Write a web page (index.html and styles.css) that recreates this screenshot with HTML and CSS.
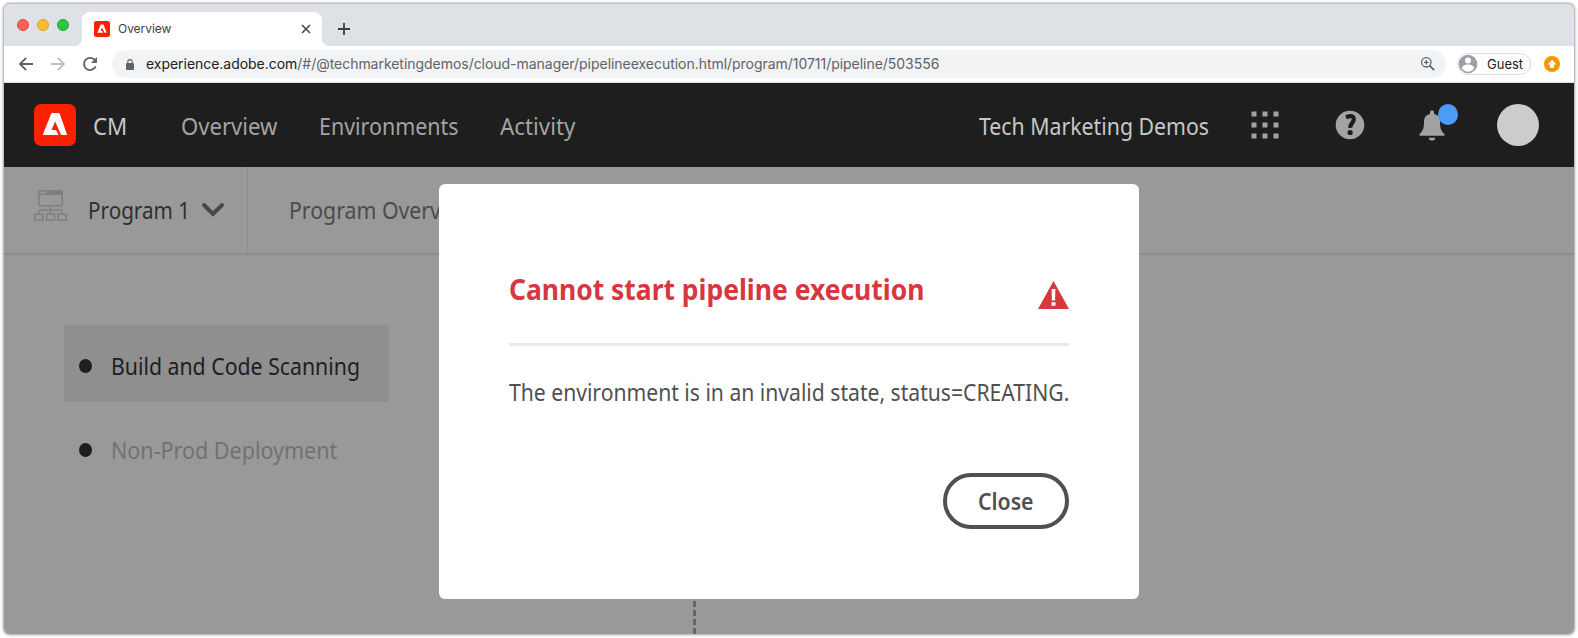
FILE: index.html
```html
<!DOCTYPE html>
<html lang="en">
<head>
<meta charset="utf-8">
<title>Overview</title>
<link rel="stylesheet" href="styles.css">
</head>
<body>
<div class="window">
  <div class="tabstrip">
    <i class="light red"></i><i class="light yellow"></i><i class="light green"></i>
    <div class="tab">
      <svg class="favicon" viewBox="0 0 42 42"><rect width="42" height="42" rx="6" fill="#fa2100"/><path d="M17.600 9.500h7.400L33 31h-5.300L21.100 17.600l-4.200 8h4.200L24.200 31H8.900z" fill="#fff"/></svg>
      <span class="tab-title">Overview</span>
      <svg class="tab-close" viewBox="0 0 10 10"><path d="M1 1l8 8M9 1L1 9" stroke="#45484c" stroke-width="1.600"/></svg>
    </div>
    <svg class="newtab" viewBox="0 0 12 12"><path d="M6 0v12M0 6h12" stroke="#3c4043" stroke-width="1.800"/></svg>
  </div>
  <div class="toolbar">
    <svg class="nav back" viewBox="0 0 14 14"><path d="M14 7H1.500M7.200 .8L1 7l6.200 6.200" fill="none" stroke="#5f6368" stroke-width="1.800"/></svg>
    <svg class="nav forward" viewBox="0 0 14 14"><path d="M0 7h12.500M6.800 .8L13 7l-6.200 6.200" fill="none" stroke="#babcbe" stroke-width="1.800"/></svg>
    <svg class="nav reload" viewBox="0 0 14 14"><path d="M12.700 9.300A6.100 6.100 0 1 1 11.500 2.700L13 4.300" fill="none" stroke="#5f6368" stroke-width="1.800"/><path d="M14 0v6H8z" fill="#5f6368"/></svg>
    <div class="address">
      <svg class="lock" viewBox="0 0 8 11"><rect y="4" width="8" height="7" rx="1" fill="#5f6368"/><path d="M1.800 4.500V2.800a2.200 2.200 0 0 1 4.400 0v1.700" fill="none" stroke="#5f6368" stroke-width="1.100"/></svg>
      <span class="url"><b>experience.adobe.com</b>/#/@techmarketingdemos/cloud-manager/pipelineexecution.html/program/10711/pipeline/503556</span>
      <svg class="zoom" viewBox="0 0 14 14"><circle cx="5.300" cy="5.300" r="4.700" fill="none" stroke="#5f6368" stroke-width="1.300"/><path d="M8.600 8.600l4.600 4.600" stroke="#5f6368" stroke-width="1.800"/><path d="M5.300 3v4.600M3 5.300h4.600" stroke="#5f6368" stroke-width="1.200"/></svg>
    </div>
    <div class="guest">
      <svg viewBox="0 0 20 20"><circle cx="10" cy="10" r="9.300" fill="#9aa0a6"/><circle cx="10" cy="6.500" r="3" fill="#fff"/><path d="M4 14.300c0-5 12-5 12 0a7 7 0 0 1-12 0z" fill="#fff"/></svg>
      <span>Guest</span>
    </div>
    <svg class="update" viewBox="0 0 16 16"><circle cx="8" cy="8" r="8" fill="#f29900"/><path d="M8 3.800l4.300 4.600H10V12H6V8.400H3.700z" fill="#fff"/></svg>
  </div>
  <header class="shell">
    <svg class="logo" viewBox="0 0 42 42"><rect width="42" height="42" rx="7" fill="#fa2100"/><path d="M18.200 9h6.300q.9 0 1.300.9L33.200 31h-5.400q-.8 0-1.200-.9L21.200 17.500l-3.700 8.600h4q.7 0 1 .7L24.500 31H8.700L17 9.900q.4-.9 1.200-.9z" fill="#fff"/></svg>
    <span class="clean product">CM</span>
    <nav>
      <span class="clean n1">Overview</span>
      <span class="clean n2">Environments</span>
      <span class="clean n3">Activity</span>
    </nav>
    <span class="clean org">Tech Marketing Demos</span>
    <svg class="apps" viewBox="0 0 28 28" fill="#a3a3a3"><path d="M.5.500h5v5h-5zM11.500.500h5v5h-5zM22.500.500h5v5h-5zM.5 11.500h5v5h-5zM11.500 11.500h5v5h-5zM22.500 11.500h5v5h-5zM.5 22.500h5v5h-5zM11.500 22.500h5v5h-5zM22.500 22.500h5v5h-5z"/></svg>
    <svg class="help" viewBox="0 0 30 30"><circle cx="15" cy="15" r="14.300" fill="#a3a3a3"/><path d="M11 7.200q7.800-2.700 7.800 1.900c0 3.800-3.800 4.500-3.600 8.700" fill="none" stroke="#1e1e1e" stroke-width="4.200"/><circle cx="15.100" cy="22.500" r="2.600" fill="#1e1e1e"/></svg>
    <div class="bell">
      <svg viewBox="0 0 26 31" fill="#a3a3a3"><path d="M11 4V1.800Q11 .5 13 .5t2 1.300V4c4 .8 6 3.500 6 8 0 6 1 9 4.500 12.300v1.500H.5v-1.500C4 21 5 18 5 12c0-4.500 2-7.200 6-8zM9.500 27.700h7q-.8 2.900-3.500 2.900t-3.500-2.900z"/></svg>
      <i class="badge"></i>
    </div>
    <i class="avatar"></i>
  </header>
  <main class="content">
    <div class="subnav">
      <div class="program">
        <svg class="tree" viewBox="0 0 33 31" fill="none" stroke="#7f7f7f" stroke-width="1.600"><rect x="4.800" y=".8" width="23.400" height="15" rx="1"/><path d="M5 4.300h23"/><path d="M12 2.500h16" stroke-width="3"/><path d="M16.500 16v8M5 24v-2.500q0-1.500 1.500-1.500h20q1.500 0 1.500 1.500V24"/><path d="M.8 24.300h8v6h-8zM12.500 24.300h8v6h-8zM24.200 24.300h8v6h-8z"/></svg>
        <span class="clean p1">Program 1</span>
        <svg class="chevron" viewBox="0 0 22 14"><path d="M2 2l9 9 9-9" fill="none" stroke="#474747" stroke-width="4" stroke-linecap="round"/></svg>
      </div>
      <span class="clean p2">Program Overview</span>
    </div>
    <div class="steps">
      <div class="step active"><i></i><span class="clean s1">Build and Code Scanning</span></div>
      <div class="step"><i></i><span class="clean s2">Non-Prod Deployment</span></div>
    </div>
    <i class="connector"></i>
    <section class="dialog">
      <div class="dialog-head">
        <h1 class="clean title">Cannot start pipeline execution</h1>
        <svg viewBox="0 0 31 28"><path d="M15.500 0L31 28H0z" fill="#d7373f"/><path d="M13.600 8h3.800l-.3 11.500h-3.200zM13.500 21.300h4v3.500h-4z" fill="#fff"/></svg>
      </div>
      <p class="clean message">The environment is in an invalid state, status=CREATING.</p>
      <button class="close"><span class="clean c1">Close</span></button>
    </section>
  </main>
</div>
</body>
</html>
```
FILE: styles.css
```css
* { box-sizing: border-box; }
body { margin: 0; padding: 4px; height: 638px; overflow: hidden; background: #fff; font-family: Inter, "Liberation Sans", sans-serif; }
svg { display: block; flex: none; overflow: visible; }
i { display: block; flex: none; }
.window { width: 1570px; height: 630px; border-radius: 6px; overflow: hidden; display: flex; flex-direction: column; box-shadow: 0 0 0 1px #bdbdbd, 0 0 3px 1px #aaa; }

.tabstrip { height: 42px; flex: none; background: #dee1e6; display: flex; padding-left: 13px; }
.light { width: 12px; height: 12px; border-radius: 50%; margin: 15px 8px 0 0; border: 1px solid; }
.red { background: #ff5f57; border-color: #e2463f; }
.yellow { background: #febc2e; border-color: #dfa023; }
.green { background: #28c840; border-color: #1dab30; }
.tab { position: relative; width: 240px; height: 34px; margin: 8px 0 0 5px; border-radius: 8px 8px 0 0; background: #fff; display: flex; align-items: center; padding: 0 12px 1px; }
.tab::before, .tab::after { content: ""; position: absolute; bottom: 0; width: 8px; height: 8px; }
.tab::before { left: -8px; background: radial-gradient(circle at 0 0, transparent 8px, #fff 8.500px); }
.tab::after { right: -8px; background: radial-gradient(circle at 100% 0, transparent 8px, #fff 8.500px); }
.favicon { width: 16px; height: 16px; }
.tab-title { font-size: 12px; color: #3c4043; margin-left: 8px; flex: 1; letter-spacing: -0.05px; }
.tab-close { width: 10px; height: 10px; margin-right: -1px; }
.newtab { width: 12px; height: 12px; margin: 19px 0 0 16px; }

.toolbar { height: 37px; flex: none; background: #fff; border-bottom: 1px solid #ddd; display: flex; align-items: center; padding-left: 15px; }
.nav { width: 14px; height: 14px; margin-right: 18px; }
.reload { margin-right: 15px; }
.address { width: 1334px; height: 28px; border-radius: 14px; background: #f1f3f4; display: flex; align-items: center; padding: 0 12px 0 14px; }
.lock { width: 8px; height: 11px; }
.url { flex: 1; margin-left: 12px; font-size: 14px; letter-spacing: -0.035px; color: #5f6368; white-space: nowrap; padding-bottom: 1px; }
.url b { font-weight: 400; color: #202124; }
.zoom { width: 14px; height: 14px; margin-right: -1px; }
.guest { width: 74px; height: 22px; margin-left: 11px; border: 1px solid #dadce0; border-radius: 11px; display: flex; align-items: center; font-size: 13px; color: #202124; }
.guest svg { width: 20px; height: 20px; }
.guest span { margin-left: 9px; }
.update { width: 16px; height: 16px; margin-left: 13px; }

/* Narrowed humanist sans used across the application */
.clean { font-family: "Noto Sans", "Open Sans", sans-serif; font-size: 23.500px; line-height: 32px; white-space: nowrap; transform: scaleX(.905); transform-origin: 0 50%; }
.shell { height: 84px; flex: none; background: #1e1e1e; display: flex; align-items: center; padding-left: 30px; color: #a3a3a3; }
.logo { width: 42px; height: 42px; }
.product { width: 88px; margin-left: 17px; color: #c8c8c8; padding-top: 2px; transform: scaleX(.95); }
nav { display: flex; width: 798px; padding-top: 1px; }
.n1 { width: 138px; transform: scaleX(.94); }
.n2 { width: 181px; transform: scaleX(.912); }
.n3 { transform: scaleX(.95); }
.org { color: #c8c8c8; width: 272px; padding-top: 2px; }
.apps { width: 28px; height: 28px; }
.help { width: 30px; height: 30px; margin-left: 56px; }
.bell { position: relative; margin-left: 54px; }
.bell svg { width: 26px; height: 31px; }
.badge { position: absolute; left: 19px; top: -6px; width: 20px; height: 21px; border-radius: 50%; background: #4b9cf5; }
.avatar { width: 42px; height: 42px; border-radius: 50%; background: #ccc; margin-left: 52px; }

.content { position: relative; flex: 1; background: #999; }
.subnav { height: 88px; border-bottom: 2px solid #8d8d8d; display: flex; align-items: center; color: #4b4b4b; }
.program { width: 244px; height: 86px; border-right: 1px solid #8d8d8d; display: flex; align-items: center; padding-left: 30px; color: #2f2f2f; }
.tree { width: 33px; height: 31px; margin-bottom: 10px; }
.p1 { width: 114px; margin-left: 21px; transform: scaleX(.88); }
.chevron { width: 22px; height: 14px; }
.p2 { margin-left: 41px; }
.steps { width: 325px; margin: 70px 0 0 60px; }
.step { height: 77px; margin-bottom: 7px; padding: 4px 0 0 15px; display: flex; align-items: center; color: #727272; }
.step i { width: 13px; height: 14px; border-radius: 50%; background: #1e1e1e; margin-right: 19px; }
.active { background: #8f8f8f; color: #1e1e1e; }
.s2 { transform: scaleX(.915); }
.connector { position: absolute; left: 689px; top: 434px; width: 3px; height: 33px; background: repeating-linear-gradient(#666 0 6px, transparent 6px 9px); }

.dialog { position: absolute; left: 435px; top: 17px; width: 700px; height: 415px; border-radius: 6px; background: #fff; padding: 84px 70px 0; display: flex; flex-direction: column; }
.dialog-head { height: 78px; border-bottom: 3px solid #eaeaea; display: flex; justify-content: space-between; }
.dialog-head svg { width: 31px; height: 28px; margin-top: 13px; }
.title { margin: 5px 0 0; font-size: 29px; font-weight: 700; color: #d7373f; transform: scaleX(.912); }
.message { margin: 30px 0 0; color: #505050; transform: scaleX(.899); }
.close { align-self: flex-end; width: 126px; height: 56px; margin-top: 65px; border: 4px solid #505050; border-radius: 28px; background: #fff; color: #505050; padding: 0; }
.c1 { display: inline-block; font-weight: 600; transform-origin: 50% 50%; }
```
